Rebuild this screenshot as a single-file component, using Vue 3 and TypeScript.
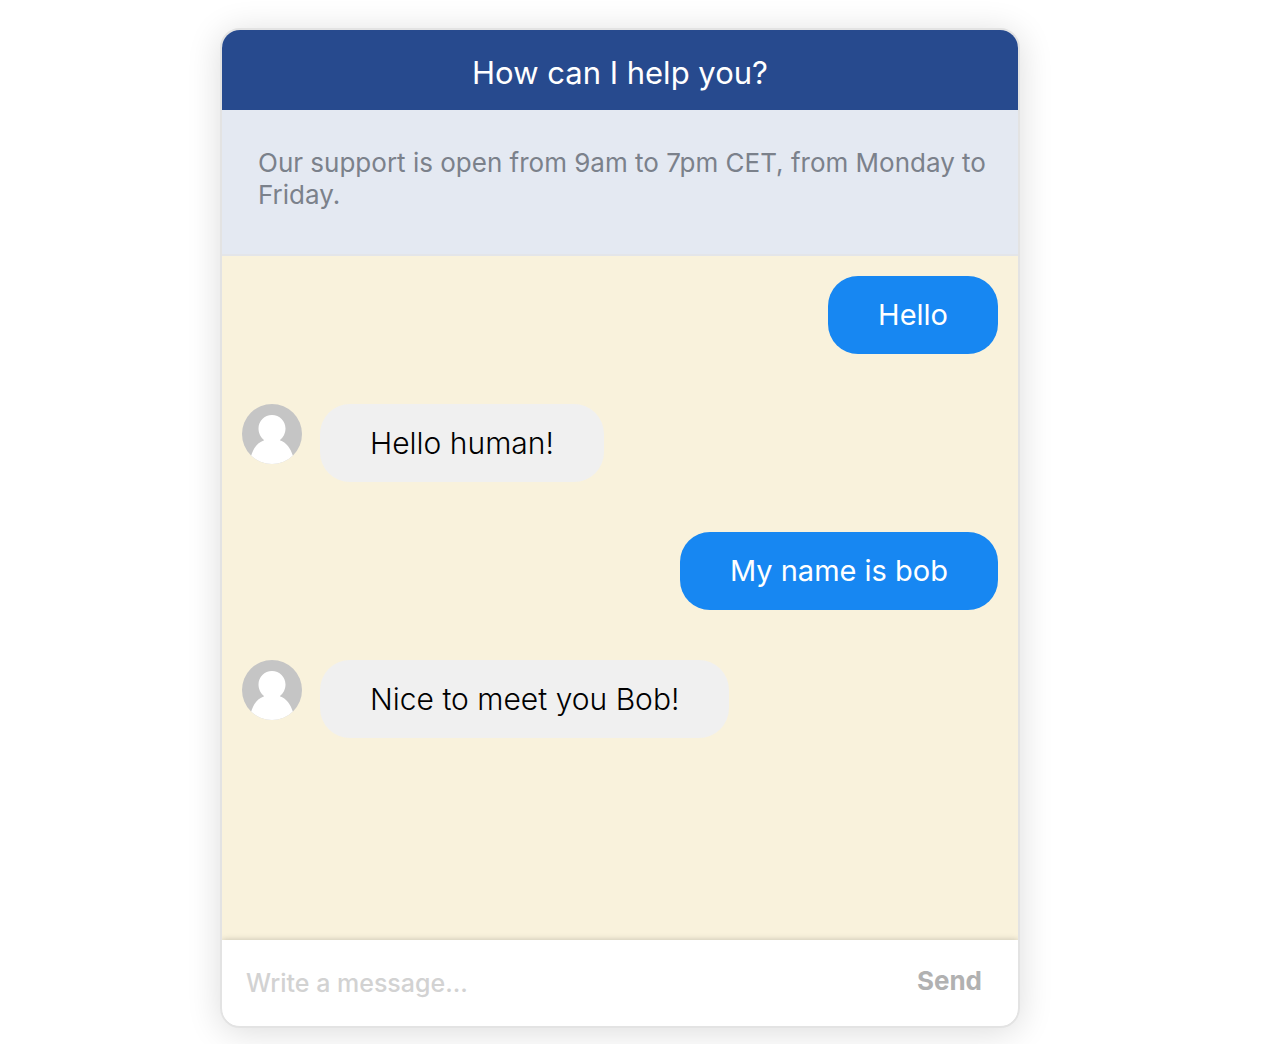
<script setup lang="ts">
import { ref } from 'vue'

interface Message {
  id: number
  from: 'user' | 'bot'
  text: string
}

const messages = ref<Message[]>([
  { id: 1, from: 'user', text: 'Hello' },
  { id: 2, from: 'bot', text: 'Hello human!' },
  { id: 3, from: 'user', text: 'My name is bob' },
  { id: 4, from: 'bot', text: 'Nice to meet you Bob!' },
])

const draft = ref('')

function send() {
  const text = draft.value.trim()
  if (!text) return
  messages.value.push({ id: messages.value.length + 1, from: 'user', text })
  draft.value = ''
}
</script>

<template>
  <main class="page">
    <section class="chat">
      <header class="chat-header">
        <h1 class="title">How can I help you?</h1>
      </header>
      <p class="notice">Our support is open from 9am to 7pm CET, from Monday to Friday.</p>
      <ul class="messages">
        <li v-for="message in messages" :key="message.id" class="message" :class="message.from">
          <svg v-if="message.from === 'bot'" class="avatar" viewBox="0 0 60 60" aria-hidden="true">
            <rect width="60" height="60" fill="#c5c5c5" />
            <path
              fill="#fff"
              d="M30 11c7.600 0 13.500 6 13.500 13.500 0 4.800-2.300 9-5.700 11.700C44.500 38.500 48.500 44 51 52V60H9V52C11.500 44 15.500 38.500 22.200 36.200c-3.400-2.700-5.700-6.900-5.700-11.700C16.500 17 22.400 11 30 11Z"
            />
          </svg>
          <span class="bubble">{{ message.text }}</span>
        </li>
      </ul>
      <form class="composer" @submit.prevent="send">
        <input v-model="draft" class="field" type="text" placeholder="Write a message..." aria-label="Message" />
        <button class="send" type="submit">Send</button>
      </form>
    </section>
  </main>
</template>

<style>
body {
  background: #fff;
}
</style>

<style scoped>
.page {
  box-sizing: border-box;
  display: flex;
  min-height: 100vh;
  padding: 28px 254px 16px 220px;
  font-family: Inter, "Liberation Sans", sans-serif;
}

.chat {
  flex: 1;
  min-width: 0;
  display: flex;
  flex-direction: column;
  border: 2px solid #e3e3e3;
  border-radius: 20px;
  background: #fff;
  box-shadow: 0 4px 34px rgba(0, 0, 0, 0.14);
  overflow: hidden;
}

.chat-header {
  padding: 23px 20px 17px;
  background: #274a8e;
  color: #fff;
  text-align: center;
}

.title {
  margin: 0;
  font-size: 31px;
  font-weight: 400;
  line-height: 40px;
}

.notice {
  margin: 0;
  padding: 37px 24px 43px 36px;
  border-bottom: 2px solid #e3e5e9;
  background: #e4e9f2;
  color: #7b818b;
  font-size: 26px;
  font-weight: 400;
  line-height: 32px;
}

.messages {
  flex: 1;
  display: flex;
  flex-direction: column;
  gap: 50px;
  margin: 0;
  padding: 20px;
  list-style: none;
  background: #f9f2dc;
}

.message {
  display: flex;
  align-items: flex-start;
  gap: 18px;
}

.user {
  justify-content: flex-end;
}

.avatar {
  flex: none;
  width: 60px;
  height: 60px;
  border-radius: 50%;
}

.bubble {
  padding: 19px 50px;
  border-radius: 30px;
  background: #f0f0f0;
  color: #000;
  font-size: 30px;
  font-weight: 300;
  line-height: 40px;
}

.user .bubble {
  background: #1787f2;
  color: #fff;
  font-size: 29px;
  font-weight: 400;
}

.composer {
  position: relative;
  display: flex;
  align-items: center;
  padding: 20px 36px 20px 24px;
  background: #fff;
  box-shadow: 0 0 6px rgba(0, 0, 0, 0.22);
}

.field {
  flex: 1;
  min-width: 0;
  height: 46px;
  padding: 0;
  border: 0;
  outline: 0;
  background: transparent;
  color: #333;
  font: 500 25px/32px Inter, "Liberation Sans", sans-serif;
}

.field::placeholder {
  color: #d2d2d2;
  opacity: 1;
}

.send {
  height: 42px;
  margin-bottom: 4px;
  padding: 0;
  border: 0;
  background: transparent;
  color: #b1b1b1;
  font: 700 26px/32px Inter, "Liberation Sans", sans-serif;
}
</style>
